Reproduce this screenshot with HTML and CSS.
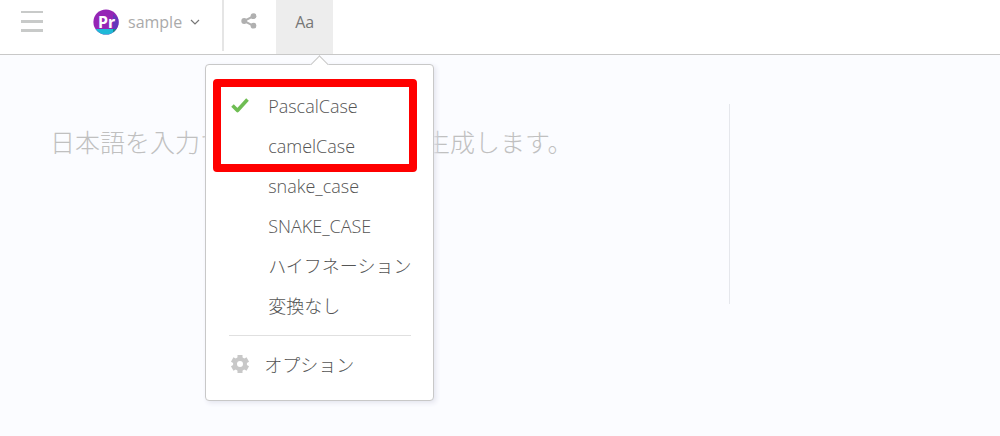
FILE: index.html
```html
<!DOCTYPE html>
<html lang="ja">
<head>
<meta charset="utf-8">
<meta name="viewport" content="width=device-width, initial-scale=1">
<title>sample</title>
<link rel="stylesheet" href="styles.css">
</head>
<body>
<header class="toolbar">
  <button class="menu-toggle" type="button" aria-label="メニュー"><span class="bar"></span><span class="bar"></span><span class="bar"></span></button>
  <button class="project" type="button">
    <svg class="project-logo" viewBox="0 0 26 26" aria-hidden="true">
      <defs><clipPath id="disc"><circle cx="13" cy="13" r="12.6"/></clipPath></defs>
      <g clip-path="url(#disc)">
        <path fill="#9526b5" d="M0 0h26v26H0z"/>
        <path fill="#6637bb" d="M20 5l6 5v10h-6z"/>
        <path fill="#1fb9d8" d="M0 20h20v6H0z"/>
        <path fill="#168c8b" d="M20 20h6v6h-6z"/>
      </g>
      <text class="logo-text" x="13.5" y="18.500" text-anchor="middle">Pr</text>
    </svg>
    <span class="project-name">sample</span>
    <svg class="chevron" viewBox="0 0 10 6" aria-hidden="true"><path d="M1 1l4 4 4-4"/></svg>
  </button>
  <button class="share" type="button" aria-label="共有">
    <svg class="share-icon" viewBox="0 0 16 16" aria-hidden="true"><path d="M12.5 3.2L3 8l9.500 4.800" fill="none" stroke="currentColor" stroke-width="2"/><circle cx="12.500" cy="3.200" r="2.900"/><circle cx="3.200" cy="8" r="2.900"/><circle cx="12.500" cy="12.700" r="2.900"/></svg>
  </button>
  <div class="case-control">
    <button class="case-toggle" type="button" aria-expanded="true">Aa</button>
    <div class="case-menu">
      <ul class="case-list">
        <li><button class="item" type="button"><svg class="check" viewBox="0 0 18 16" aria-hidden="true"><path d="M1.500 7.500l5 5L16.500 1.500"/></svg><span>PascalCase</span></button></li>
        <li><button class="item" type="button"><span>camelCase</span></button></li>
        <li><button class="item" type="button"><span>snake_case</span></button></li>
        <li><button class="item" type="button"><span>SNAKE_CASE</span></button></li>
        <li><button class="item" type="button"><span>ハイフネーション</span></button></li>
        <li><button class="item" type="button"><span>変換なし</span></button></li>
      </ul>
      <button class="item options" type="button">
        <svg class="gear" viewBox="0 0 20 20" aria-hidden="true"><circle cx="10" cy="10" r="5" fill="none" stroke="currentColor" stroke-width="4"/><g id="teeth" fill="currentColor"><path d="M7.500 1h5v4h-5zM7.500 15h5v4h-5z"/><path d="M7.500 1h5v4h-5zM7.500 15h5v4h-5z" transform="rotate(60 10 10)"/><path d="M7.500 1h5v4h-5zM7.500 15h5v4h-5z" transform="rotate(120 10 10)"/></g></svg>
        <span>オプション</span>
      </button>
      <div class="highlight"></div>
    </div>
  </div>
</header>
<main class="workspace">
  <textarea class="source" aria-label="日本語" placeholder="日本語を入力するとネーミングを生成します。"></textarea>
  <section class="result" aria-label="生成結果"></section>
</main>
</body>
</html>
```
FILE: styles.css
```css
* { box-sizing: border-box; }
body {
  margin: 0;
  min-height: 100vh;
  display: flex;
  flex-direction: column;
  background: #fbfcff;
  color: #666;
  font-family: "Open Sans", "Noto Sans CJK JP", sans-serif;
}
button {
  margin: 0;
  padding: 0;
  border: 0;
  background: none;
  color: inherit;
  font: inherit;
  cursor: pointer;
}
.toolbar {
  display: flex;
  height: 55px;
  padding-left: 21px;
  background: #fff;
  border-bottom: 1px solid #c8c8c8;
}
.menu-toggle {
  display: flex;
  flex-direction: column;
  gap: 7px;
  width: 22px;
  padding-top: 11px;
}
.bar {
  height: 2px;
  background: #c8cac9;
}
.bar + .bar { height: 3px; margin-bottom: -1px; }
.project {
  display: flex;
  align-items: center;
  height: 44px;
  margin-left: 50px;
  padding-right: 22px;
  color: #aaa;
  font-size: 16px;
}
.project-logo { width: 26px; height: 26px; }
.logo-text {
  fill: #fff;
  font: 700 16px "Liberation Sans Narrow", "Noto Sans", sans-serif;
}
.project-name { margin-left: 9px; }
.chevron {
  width: 10px;
  height: 6px;
  margin-left: 8px;
  fill: none;
  stroke: #777;
  stroke-width: 1.2;
}
.share {
  height: 51px;
  width: 54px;
  padding: 0 3px 10px 0;
  border-left: 2px solid #e5e5e5;
  color: #b0b0b0;
}
.share-icon {
  display: block;
  width: 16px;
  height: 16px;
  margin: 0 auto;
  fill: currentColor;
}
.case-control { position: relative; }
.case-toggle {
  width: 57px;
  height: 54px;
  padding-bottom: 10px;
  background: #ededed;
  color: #777;
  font-size: 16px;
}
.case-menu {
  position: absolute;
  z-index: 1;
  top: 64px;
  left: -71px;
  width: 229px;
  padding: 21px 22px 15px 23px;
  background: #fff;
  border: 1px solid #c8c8c8;
  border-radius: 4px;
  box-shadow: 2px 2px 5px #e4e5ef;
  color: #555;
  font-size: 18px;
  font-weight: 300;
}
.case-menu::before {
  content: "";
  position: absolute;
  top: -7px;
  left: 107px;
  width: 12px;
  height: 12px;
  background: #fff;
  border: solid #c8c8c8;
  border-width: 1px 0 0 1px;
  transform: rotate(45deg);
}
.case-list {
  margin: 0;
  padding: 0 0 9px;
  list-style: none;
  border-bottom: 1px solid #e0e0e0;
}
.item {
  display: grid;
  grid-template-columns: 39px auto;
  align-items: center;
  width: 100%;
  height: 40px;
  line-height: 24px;
  text-align: left;
  white-space: nowrap;
}
.item span { grid-column: 2; }
.check {
  width: 18px;
  height: 16px;
  margin-left: 2px;
  fill: none;
  stroke: #6fbd53;
  stroke-width: 3.6;
  stroke-linejoin: round;
}
.options {
  grid-template-columns: 35px auto;
  margin-top: 9px;
}
.gear {
  width: 20px;
  height: 20px;
  margin: 0 0 3px 1px;
  color: #c8c8c8;
}
.highlight {
  position: absolute;
  top: 14px;
  left: 7px;
  width: 204px;
  height: 93px;
  border: 8px solid #f00;
  border-radius: 4px;
  pointer-events: none;
}
.workspace {
  display: grid;
  grid-template-columns: 73% 1fr;
  padding-top: 49px;
}
.source {
  height: 200px;
  padding: 19px 50px;
  border: 0;
  border-right: 1px solid #e5e7ec;
  outline: 0;
  resize: none;
  background: none;
  color: #666;
  font: 300 25px/36px "Noto Sans CJK JP", sans-serif;
}
.source::placeholder { color: #c0c0c0; }
```
